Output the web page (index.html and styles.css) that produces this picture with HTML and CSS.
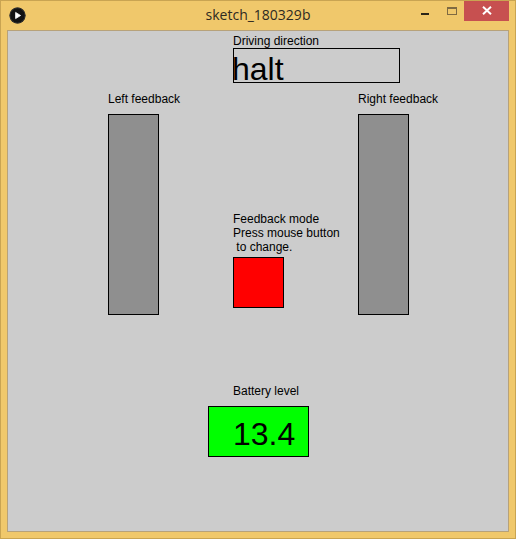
FILE: index.html
```html
<!DOCTYPE html>
<html lang="en">
<head>
<meta charset="utf-8">
<title>sketch_180329b</title>
<link rel="stylesheet" href="styles.css">
</head>
<body>
<div class="window">
  <header class="titlebar">
    <div class="tb-left">
      <svg class="app-icon" width="17" height="17" viewBox="0 0 17 17" aria-hidden="true">
        <circle cx="8.5" cy="8.5" r="8" fill="#121212"/>
        <circle cx="8.5" cy="8.5" r="7.6" fill="none" stroke="#3a3a3a" stroke-width="0.8"/>
        <path d="M6.6 5.4 L11.6 8.5 L6.6 11.6 Z" fill="#ffffff" stroke="#ffffff" stroke-width="0.8" stroke-linejoin="round"/>
      </svg>
    </div>
    <div class="title">sketch_180329b</div>
    <div class="tb-right">
      <div class="btn btn-min"><span class="min-glyph"></span></div>
      <div class="btn btn-max"><span class="max-glyph"></span></div>
      <div class="btn btn-close">
        <svg width="10" height="9" viewBox="0 0 10 9" aria-hidden="true">
          <path d="M1 0.8 L9 8.2 M9 0.8 L1 8.2" stroke="#ffffff" stroke-width="2" stroke-linecap="butt"/>
        </svg>
      </div>
    </div>
  </header>
  <main class="client">
    <div class="canvas">
      <section class="widget w-direction">
        <div class="label">Driving direction</div>
        <div class="box box-direction"><span class="big-text halt">halt</span></div>
      </section>
      <section class="widget w-left">
        <div class="label">Left feedback</div>
        <div class="box bar"></div>
      </section>
      <section class="widget w-right">
        <div class="label">Right feedback</div>
        <div class="box bar"></div>
      </section>
      <section class="widget w-mode">
        <div class="label label-multi">Feedback mode
Press mouse button
 to change.</div>
        <div class="box mode-box"></div>
      </section>
      <section class="widget w-battery">
        <div class="label label-battery">Battery level</div>
        <div class="box battery-box"><span class="big-text voltage">13.4</span></div>
      </section>
    </div>
  </main>
</div>
</body>
</html>
```
FILE: styles.css
```css
* { box-sizing: border-box; }

html, body {
  margin: 0;
  padding: 0;
  background: #f0c86b;
}

.window {
  width: 516px;
  height: 539px;
  background: #f0c86b;
  border: 1px solid #c9a452;
  display: flex;
  flex-direction: column;
}

.titlebar {
  height: 29px;
  display: grid;
  grid-template-columns: 1fr auto 1fr;
  align-items: start;
}

.tb-left {
  padding-left: 8px;
  padding-top: 6px;
  display: flex;
}

.app-icon { display: block; }

.title {
  font-family: "Open Sans", "Noto Sans", sans-serif;
  font-size: 14px;
  line-height: 20px;
  padding-top: 4px;
  color: #2e2a22;
  white-space: nowrap;
}

.tb-right {
  justify-self: end;
  display: flex;
  padding-right: 6px;
}

.btn {
  height: 20px;
  display: flex;
  justify-content: center;
}

.btn-min { width: 26px; padding-right: 3px; }
.btn-max { width: 25px; }
.btn-close {
  width: 45px;
  background: #c75050;
  align-items: center;
}
.btn-close svg { display: block; margin-left: 1px; margin-top: -1px; }

.min-glyph {
  display: block;
  width: 8px;
  height: 2px;
  margin-top: 12px;
  background: #2b2518;
}

.max-glyph {
  display: block;
  width: 10px;
  height: 8px;
  margin-top: 6px;
  margin-left: 1px;
  border: 1px solid #7f6a42;
  border-top-width: 2px;
}

.client {
  margin: 0 6px 6px;
  border: 1px solid #b7a27a;
}

.canvas {
  position: relative;
  width: 500px;
  height: 500px;
  background: #cccccc;
  font-family: "Liberation Sans", Arial, sans-serif;
  font-size: 12px;
  color: #000;
}

.widget {
  position: absolute;
  display: flex;
  flex-direction: column;
  align-items: flex-start;
}

.label {
  line-height: 13px;
  white-space: nowrap;
}

.label-multi {
  line-height: 14px;
  white-space: pre;
}

.box {
  border: 1px solid #000;
}

.big-text {
  display: block;
  font-size: 32px;
  line-height: 32px;
  white-space: nowrap;
}

/* Driving direction */
.w-direction { left: 225px; top: 4px; }
.box-direction {
  width: 167px;
  height: 35px;
  background: #cccccc;
  padding-top: 4px;
}
.halt { text-indent: -2px; }

/* Feedback bars */
.w-left { left: 100px; top: 62px; gap: 8px; }
.w-right { left: 350px; top: 62px; gap: 8px; }
.bar {
  width: 51px;
  height: 201px;
  background: #8f8f8f;
}

/* Feedback mode */
.w-mode { left: 225px; top: 181px; gap: 3px; }
.mode-box {
  width: 51px;
  height: 51px;
  background: #ff0000;
}

/* Battery */
.w-battery { left: 200px; top: 354px; gap: 8px; }
.label-battery { margin-left: 25px; }
.battery-box {
  width: 101px;
  height: 51px;
  background: #00ff00;
  padding-top: 11px;
  padding-left: 24px;
}
```
